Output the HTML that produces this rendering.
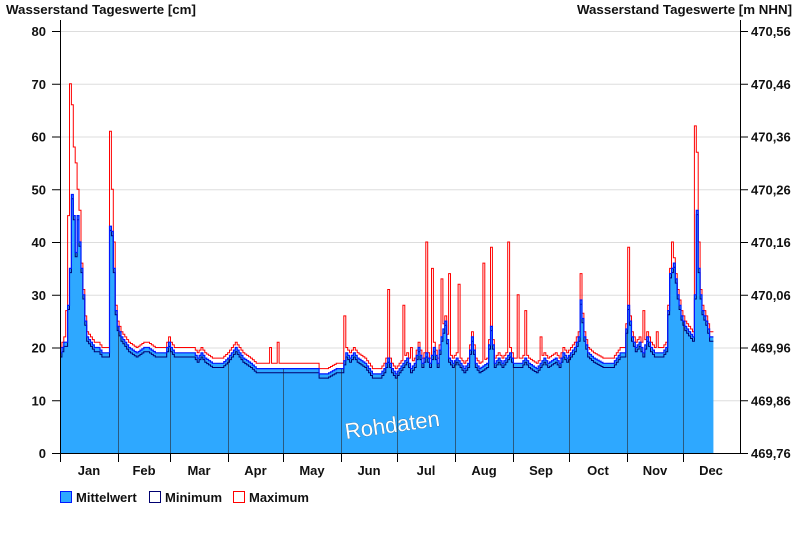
<!DOCTYPE html>
<html><head><meta charset="utf-8"><style>
body{margin:0;background:#fff;width:800px;height:550px;overflow:hidden}
text{font-family:"Liberation Sans",sans-serif;font-weight:bold;font-size:13px;fill:#111}
</style></head><body>
<svg id="s" width="800" height="550" xmlns="http://www.w3.org/2000/svg">
<text x="6" y="14" style="font-size:13.3px">Wasserstand Tageswerte [cm]</text>
<text x="792" y="14" text-anchor="end" style="font-size:13.3px">Wasserstand Tageswerte [m NHN]</text>
<g id="grid"></g>
<g id="data"></g>
<line x1="60.5" y1="20" x2="60.5" y2="454" stroke="#000"/>
<line x1="740.5" y1="20" x2="740.5" y2="454" stroke="#000"/>
<line x1="52" y1="453.5" x2="740" y2="453.5" stroke="#000"/>
<g id="lab"></g>
<text x="346" y="439" transform="rotate(-8 346 439)" style="font-size:22px;font-weight:normal;fill:#fff;stroke:#3a6a90;stroke-width:0.6;paint-order:stroke">Rohdaten</text>
<rect x="60.5" y="491.5" width="11" height="11" fill="#2ea8ff" stroke="#0018ff"/>
<text x="76" y="502">Mittelwert</text>
<rect x="149.5" y="491.5" width="11" height="11" fill="#fff" stroke="#000070"/>
<text x="165" y="502">Minimum</text>
<rect x="233.5" y="491.5" width="11" height="11" fill="#fff" stroke="#f00"/>
<text x="249" y="502">Maximum</text>
</svg>
<script>
var X=function(d){return 60+d*1.905},Y=function(v){return 453-v*5.275};
var k=[0,19,2,21,3,21,5,35,6,49,7,45,8,38,9,45,10,40,11,35,12,30,13,25,14,22,16,21,18,20,20,20,22,19,25,19,26,43,27,42,28,35,29,27,30,24,32,22,34,21,36,20,40,19,44,20,46,20,50,19,55,19,57,21,58,20,60,19,70,19,72,18,74,19,76,18,80,17,85,17,88,18,90,19,92,20,94,19,96,18,100,17,103,16,110,16,120,16,135,16,136,15,140,15,145,16,148,16,150,19,152,18,154,19,156,18,160,17,162,16,164,15,168,15,170,16,172,18,174,16,176,15,178,16,180,17,182,18,184,16,186,17,188,20,190,17,192,19,194,17,196,20,198,17,200,22,202,25,204,18,206,17,208,18,210,17,212,16,214,17,216,22,218,17,220,16,224,17,226,24,228,17,230,18,232,17,236,19,238,17,242,17,244,18,246,17,250,16,254,18,256,17,260,18,262,17,264,19,266,18,270,20,272,22,273,29,275,22,277,19,280,18,285,17,290,17,292,18,294,19,296,19,298,28,300,22,302,20,304,21,306,19,308,22,310,20,312,19,316,19,318,20,320,34,322,36,324,30,326,26,328,24,330,23,332,22,333,30,334,46,335,35,336,30,337,27,339,25,341,22,342,22];
var m=[];for(var d=0;d<=342;d++){var i=0;while(k[i+2]<=d&&i+2<k.length)i+=2;var d0=k[i],v0=k[i+1],d1=k[i+2],v1=k[i+3];m.push(d1===undefined||d1==d0?v0:v0+(v1-v0)*(d-d0)/(d1-d0));}
var sp={3:27,4:45,5:70,6:66,7:58,8:55,9:50,10:46,26:61,27:50,28:40,110:20,114:21,149:26,172:31,180:28,184:20,192:40,195:35,200:33,204:34,209:32,222:36,226:39,235:40,240:30,244:27,252:22,273:34,298:39,306:27,313:23,321:40,333:62,334:57,335:40};
var mx=[],mn=[];for(d=0;d<=342;d++){mx.push(Math.max(m[d]+1,sp[d]||0));mn.push(m[d]-0.8);}
function step(a){var s="";for(var d=0;d<a.length;d++){s+=(d?"L":"M")+X(d).toFixed(1)+","+Y(a[d]).toFixed(1)+"L"+X(d+1).toFixed(1)+","+Y(a[d]).toFixed(1);}return s;}
var h="";
for(var v=10;v<=80;v+=10)h+='<line x1="60" x2="740" y1="'+(Y(v)+.5)+'" y2="'+(Y(v)+.5)+'" stroke="#ddd"/>';
document.getElementById("grid").innerHTML=h;
var p=step(m);
var xs=[60,118,170,228,283,341,397,455,513,569,627,683];
var g='<clipPath id="c"><path d="'+p+'L'+X(343)+',453L60,453Z"/></clipPath><path d="'+p+'L'+X(343)+',453L60,453Z" fill="#2ea8ff"/>';
g+='<g clip-path="url(#c)">';for(i=1;i<12;i++)g+='<line x1="'+(xs[i]+.5)+'" x2="'+(xs[i]+.5)+'" y1="20" y2="453" stroke="#2a5a80"/>';g+='</g>';
g+='<path d="'+step(mx)+'" fill="none" stroke="#f00"/><path d="'+step(mn)+'" fill="none" stroke="#000070"/><path d="'+p+'" fill="none" stroke="#0018ff" stroke-width="1.2"/>';
document.getElementById("data").innerHTML=g;
var L="",mo=["Jan","Feb","Mar","Apr","May","Jun","Jul","Aug","Sep","Oct","Nov","Dec"];
var r=["469,76","469,86","469,96","470,06","470,16","470,26","470,36","470,46","470,56"];
for(v=0;v<=80;v+=10){var y=Y(v);L+='<line x1="52" x2="60" y1="'+(y+.5)+'" y2="'+(y+.5)+'" stroke="#000"/><text x="46" y="'+(y+5)+'" text-anchor="end">'+v+'</text>';L+='<line x1="740" x2="748" y1="'+(y+.5)+'" y2="'+(y+.5)+'" stroke="#000"/><text x="751" y="'+(y+5)+'">'+r[v/10]+'</text>';}
xs.push(739);for(i=0;i<12;i++){L+='<line x1="'+(xs[i]+.5)+'" x2="'+(xs[i]+.5)+'" y1="453" y2="462" stroke="#000"/><text x="'+((xs[i]+xs[i+1])/2)+'" y="475" text-anchor="middle">'+mo[i]+'</text>';}
document.getElementById("lab").innerHTML=L;
</script>
</body></html>
